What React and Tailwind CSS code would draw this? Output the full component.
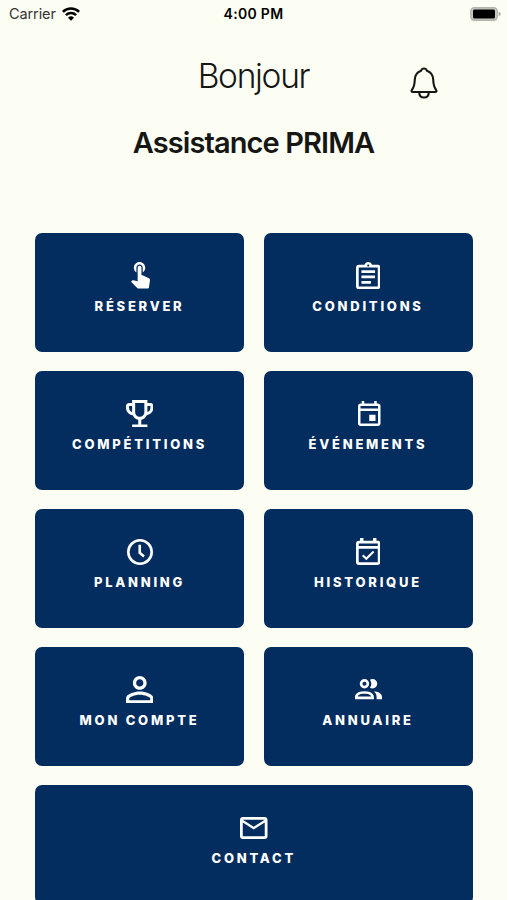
import { useState } from 'react'

const ICONS = {
  touch: {
    box: '4.75 3 15 21',
    w: 19,
    h: 26.5,
    d: 'M9 11.24V7.5C9 6.12 10.12 5 11.5 5S14 6.12 14 7.5v3.74c1.21-.81 2-2.18 2-3.74C16 5.01 13.99 3 11.5 3S7 5.01 7 7.5c0 1.56.79 2.93 2 3.74zm9.84 4.63l-4.54-2.26c-.17-.07-.35-.11-.54-.11H13v-6c0-.83-.67-1.5-1.5-1.5S10 6.67 10 7.5v10.74l-3.43-.72c-.08-.01-.15-.03-.24-.03-.31 0-.59.13-.79.33l-.79.8 4.94 4.94c.27.27.65.44 1.06.44h6.79c.75 0 1.33-.55 1.44-1.28l.75-5.27c.01-.07.02-.14.02-.2 0-.62-.38-1.16-.91-1.38z',
  },
  clipboard: {
    box: '3 1 18 20',
    w: 24.5,
    h: 27.2,
    d: 'M7 15h7v2H7zm0-4h10v2H7zm0-4h10v2H7zm12-4h-4.18C14.4 1.84 13.3 1 12 1c-1.3 0-2.4.84-2.82 2H5c-1.1 0-2 .9-2 2v14c0 1.1.9 2 2 2h14c1.1 0 2-.9 2-2V5c0-1.1-.9-2-2-2zm-7-.25c.41 0 .75.34.75.75s-.34.75-.75.75-.75-.34-.75-.75.34-.75.75-.75zM19 19H5V5h14v14z',
  },
  trophy: {
    box: '3 3 18 18',
    w: 27.5,
    h: 27.5,
    d: 'M19 5h-2V3H7v2H5c-1.1 0-2 .9-2 2v1c0 2.55 1.92 4.63 4.39 4.94.63 1.5 1.98 2.63 3.61 2.96V19H7v2h10v-2h-4v-3.1c1.63-.33 2.98-1.46 3.61-2.96C19.08 12.63 21 10.55 21 8V7c0-1.1-.9-2-2-2zM5 8V7h2v3.82C5.84 10.4 5 9.3 5 8zm7 6c-1.65 0-3-1.35-3-3V5h6v6c0 1.65-1.35 3-3 3zm7-6c0 1.3-.84 2.4-2 2.82V7h2v1z',
  },
  event: {
    box: '3 2 18 20',
    w: 22.5,
    h: 25,
    d: 'M19 4h-1V2h-2v2H8V2H6v2H5c-1.1 0-2 .9-2 2v14c0 1.1.9 2 2 2h14c1.1 0 2-.9 2-2V6c0-1.1-.9-2-2-2zm0 16H5V10h14v10zm0-12H5V6h14v2zm-7 5h5v5h-5z',
  },
  clock: {
    box: '2 2 20 20',
    w: 26,
    h: 26,
    d: 'M12 20a8 8 0 1 0 0-16 8 8 0 0 0 0 16zm0-18a10 10 0 1 1 0 20 10 10 0 0 1 0-20zm.8 4.500v5.600l2.900 2.500-1.200 1.600-3.700-3.100V6.500z',
  },
  calendarCheck: {
    box: '3 1 18 20',
    w: 24.5,
    h: 27,
    d: 'M19 3h-1V1h-2.500v2h-7V1H6v2H5c-1.1 0-2 .9-2 2v14c0 1.1.9 2 2 2h14c1.1 0 2-.9 2-2V5c0-1.1-.9-2-2-2zm0 16H5V9h14v10zm0-12H5V5h14v2zM10.56 17.46l5.94-5.93-1.07-1.06-4.87 4.87-2.11-2.11-1.06 1.06z',
  },
  person: {
    box: '4 4 16 16',
    w: 27.5,
    h: 27.5,
    d: 'M12 5.9c1.16 0 2.1.94 2.1 2.1s-.94 2.1-2.1 2.1S9.9 9.16 9.9 8s.94-2.1 2.1-2.1m0 9c2.97 0 6.1 1.46 6.1 2.1v1.1H5.9V17c0-.64 3.13-2.1 6.1-2.1M12 4C9.79 4 8 5.79 8 8s1.79 4 4 4 4-1.79 4-4-1.79-4-4-4zm0 9c-2.67 0-8 1.34-8 4v3h16v-3c0-2.66-5.33-4-8-4z',
  },
  people: {
    box: '2 4 20 15',
    w: 27,
    h: 20.25,
    d: 'M13.07 10.41A5 5 0 0 0 13.07 4.59A3.39 3.39 0 0 1 15 4A3.5 3.5 0 0 1 15 11A3.39 3.39 0 0 1 13.07 10.41M5.5 7.5A3.5 3.5 0 1 1 9 11A3.5 3.5 0 0 1 5.5 7.5M7.5 7.5A1.5 1.5 0 1 0 9 6A1.5 1.5 0 0 0 7.5 7.5M16 17V19H2V17S2 13 9 13 16 17 16 17M14 17C13.86 16.22 12.67 15 9 15S4.07 16.31 4 17M15.95 13A5.32 5.32 0 0 1 18 17V19H22V17S22 13.37 15.94 13Z',
  },
  mail: {
    box: '2 4 20 16',
    w: 27.5,
    h: 22,
    d: 'M22 6c0-1.1-.9-2-2-2H4c-1.1 0-2 .9-2 2v12c0 1.1.9 2 2 2h16c1.1 0 2-.9 2-2V6zm-2 0l-8 5-8-5h16zm0 12H4V8l8 5 8-5v10z',
  },
}

const TILES = [
  { label: 'RÉSERVER', icon: 'touch', nudge: 'pl-px' },
  { label: 'CONDITIONS', icon: 'clipboard' },
  { label: 'COMPÉTITIONS', icon: 'trophy' },
  { label: 'ÉVÉNEMENTS', icon: 'event', nudge: 'pl-[3px] pb-px' },
  { label: 'PLANNING', icon: 'clock' },
  { label: 'HISTORIQUE', icon: 'calendarCheck' },
  { label: 'MON COMPTE', icon: 'person' },
  { label: 'ANNUAIRE', icon: 'people' },
  { label: 'CONTACT', icon: 'mail', wide: true },
]

function TileIcon({ name }) {
  const icon = ICONS[name]
  return (
    <svg viewBox={icon.box} width={icon.w} height={icon.h} fill="currentColor" fillRule="evenodd" preserveAspectRatio="none">
      <path d={icon.d} />
    </svg>
  )
}

function Tile({ label, icon, wide, nudge = '', onClick }) {
  return (
    <button
      type="button"
      onClick={onClick}
      className={`flex h-[118.5px] flex-col items-center rounded-[7px] bg-[#022d5e] pt-[26.5px] text-white ${wide ? 'col-span-2' : ''}`}
    >
      <span className={`flex h-8 items-center justify-center ${nudge}`}>
        <TileIcon name={icon} />
      </span>
      <span className="mt-1 text-[13px] leading-5 font-extrabold tracking-[2.75px]">{label}</span>
    </button>
  )
}

function StatusBar() {
  return (
    <div className="grid h-[27px] grid-cols-3 items-center pr-[6px] pl-[9px] text-black">
      <div className="flex items-center gap-[6px]">
        <span className="text-[14.5px] tracking-[-0.1px] text-[#333]">Carrier</span>
        <svg viewBox="0 0 18 14" className="h-[14px] w-[18px]" fill="none" stroke="currentColor" strokeWidth="2.5">
          <path d="M.9 4.9a11.6 11.6 0 0 1 16.2 0" />
          <path d="M3.9 8.2a7.3 7.3 0 0 1 10.2 0" />
          <path d="M9 13.7 6 10.7a4.3 4.3 0 0 1 6 0z" fill="currentColor" stroke="none" />
        </svg>
      </div>
      <div className="pr-[3px] text-center text-[14px] font-semibold tracking-[0.3px]">4:00 PM</div>
      <svg viewBox="0 0 31 14" className="h-[14px] w-[31px] justify-self-end">
        <rect x=".75" y=".75" width="26.5" height="12.5" rx="3.5" fill="#c9c9c2" stroke="#b4b4ae" strokeWidth="1.3" />
        <rect x="3" y="2.5" width="22" height="9" rx="1.5" fill="#000" />
        <path d="M28.7 4.8v4.4c1.4-.4 2-1.200 2-2.200s-.6-1.800-2-2.200z" fill="#aaaaa5" />
      </svg>
    </div>
  )
}

function BellIcon() {
  return (
    <svg viewBox="0 0 28 32" className="h-8 w-7" fill="none" stroke="currentColor" strokeWidth="2.1" strokeLinejoin="round">
      <path d="M14 1.500c-1.500 0-2.500.8-2.900 2.200C7.200 5 5 8.200 4.800 12.500c-.2 5.400-.6 7.300-2.700 10.200-1.100 1.500-.7 2.300.9 2.300h22c1.600 0 2-.8.9-2.300-2.100-2.900-2.500-4.800-2.700-10.200C23 8.200 20.800 5 16.900 3.700 16.500 2.300 15.500 1.500 14 1.500z" />
      <path d="M9.200 25.200c0 3.300 1.900 5.300 4.800 5.300s4.800-2 4.800-5.300" />
    </svg>
  )
}

export default function App() {
  const [, setScreen] = useState(null)

  return (
    <div className="h-[900px] w-[507px] overflow-hidden bg-[#fcfdf3] font-['Inter',sans-serif] text-[#161714]">
      <StatusBar />
      <header className="relative flex h-[206px] flex-col items-center">
        <h1 className="mt-[29px] text-[33.5px] leading-10 font-[350] tracking-[-1.3px]">Bonjour</h1>
        <h2 className="mt-[29px] text-[29px] leading-9 font-semibold tracking-[-0.9px]">Assistance PRIMA</h2>
        <button type="button" aria-label="Notifications" className="absolute top-10 left-[410px]">
          <BellIcon />
        </button>
      </header>
      <main className="grid grid-cols-2 gap-x-[19.5px] gap-y-[19.5px] pr-[34.5px] pl-[35px]">
        {TILES.map((t) => (
          <Tile key={t.label} {...t} onClick={() => setScreen(t.label)} />
        ))}
      </main>
    </div>
  )
}
